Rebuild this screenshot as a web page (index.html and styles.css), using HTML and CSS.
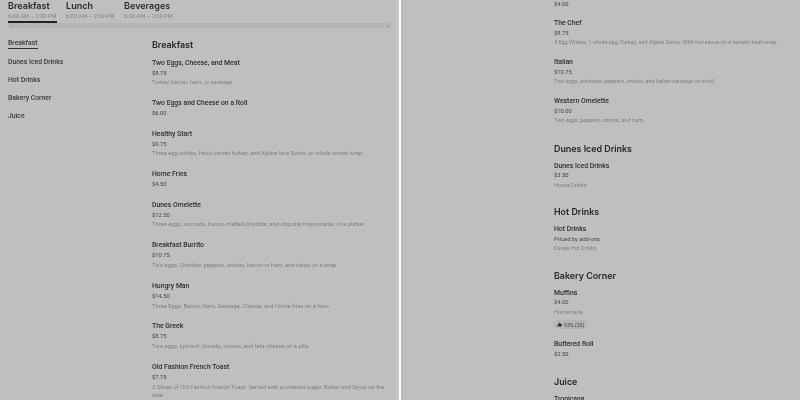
FILE: index.html
```html
<!DOCTYPE html>
<html lang="en">
<head>
<meta charset="utf-8">
<title>Menu</title>
<link rel="stylesheet" href="styles.css">
</head>
<body>
<main class="split">
  <section class="panel panel-left">
    <nav class="tabs">
      <div class="tab tab-active"><div class="tab-name">Breakfast</div><div class="tab-time">6:00 AM – 2:00 PM</div></div>
      <div class="tab"><div class="tab-name">Lunch</div><div class="tab-time">6:00 AM – 2:00 PM</div></div>
      <div class="tab"><div class="tab-name">Beverages</div><div class="tab-time">6:00 AM – 2:00 PM</div></div>
    </nav>
    <div class="hscroll"><span class="arrow">‹</span><span class="arrow">›</span></div>
    <div class="columns">
      <aside class="side">
        <a class="side-link side-active">Breakfast</a>
        <a class="side-link">Dunes Iced Drinks</a>
        <a class="side-link">Hot Drinks</a>
        <a class="side-link">Bakery Corner</a>
        <a class="side-link">Juice</a>
      </aside>
      <div class="menu">
        <h2 class="cat">Breakfast</h2>
        <div class="item"><h3>Two Eggs, Cheese, and Meat</h3><p class="price">$8.75</p><p class="desc">Turkey, bacon, ham, or sausage</p></div>
        <div class="item"><h3>Two Eggs and Cheese on a Roll</h3><p class="price">$6.00</p></div>
        <div class="item"><h3>Healthy Start</h3><p class="price">$9.75</p><p class="desc">Three egg whites, fresh carved turkey, and Alpine lace Swiss on whole wheat wrap.</p></div>
        <div class="item"><h3>Home Fries</h3><p class="price">$4.50</p></div>
        <div class="item"><h3>Dunes Omelette</h3><p class="price">$12.50</p><p class="desc">Three eggs, avocado, bacon, melted Cheddar, and chipotle mayonnaise. In a platter.</p></div>
        <div class="item"><h3>Breakfast Burrito</h3><p class="price">$10.75</p><p class="desc">Two eggs, Cheddar, peppers, onions, bacon or ham, and salsa on a wrap.</p></div>
        <div class="item"><h3>Hungry Man</h3><p class="price">$14.50</p><p class="desc">Three Eggs, Bacon, Ham, Sausage, Cheese, and Home fries on a hero.</p></div>
        <div class="item"><h3>The Greek</h3><p class="price">$8.75</p><p class="desc">Two eggs, spinach, tomato, onions, and feta cheese on a pita.</p></div>
        <div class="item"><h3>Old Fashion French Toast</h3><p class="price">$7.75</p><p class="desc">3 Slices of Old Fashion French Toast. Served with powdered sugar. Butter and Syrup on the side.</p></div>
      </div>
    </div>
  </section>
  <section class="panel panel-right">
    <div class="menu">
      <p class="price price-cut">$4.00</p>
      <div class="item"><h3>The Chef</h3><p class="price">$8.75</p><p class="desc">4 Egg Whites, 1 whole egg, Turkey, and Alpine Swiss. With hot sauce on a tomato basil wrap.</p></div>
      <div class="item"><h3>Italian</h3><p class="price">$10.75</p><p class="desc">Two eggs, potatoes, peppers, onions, and Italian sausage on a roll.</p></div>
      <div class="item"><h3>Western Omelette</h3><p class="price">$10.00</p><p class="desc">Two eggs, peppers, onions, and ham.</p></div>
      <section class="group group-lead">
        <h2 class="cat">Dunes Iced Drinks</h2>
        <div class="item"><h3>Dunes Iced Drinks</h3><p class="price">$3.50</p><p class="desc">House Drinks</p></div>
      </section>
      <section class="group">
        <h2 class="cat">Hot Drinks</h2>
        <div class="item"><h3>Hot Drinks</h3><p class="price">Priced by add-ons</p><p class="desc">Dunes Hot Drinks</p></div>
      </section>
      <section class="group">
        <h2 class="cat">Bakery Corner</h2>
        <div class="item"><h3>Muffins</h3><p class="price">$4.00</p><p class="desc">Homemade</p>
          <span class="pill"><svg class="thumb" viewBox="0 0 12 12" aria-hidden="true"><path d="M1 5.5h2.2V11H1zM4 5.2 6.2 1c.9 0 1.5.7 1.3 1.6L7.2 4.4h2.9c.8 0 1.3.7 1.1 1.4l-1 4.2c-.2.6-.6 1-1.2 1H4z"/></svg>93% (33)</span>
        </div>
        <div class="item"><h3>Buttered Roll</h3><p class="price">$2.50</p></div>
      </section>
      <section class="group">
        <h2 class="cat">Juice</h2>
        <div class="item"><h3>Tropicana</h3></div>
      </section>
    </div>
  </section>
</main>
</body>
</html>
```
FILE: styles.css
```css
* { box-sizing: border-box; }
html, body { margin: 0; height: 100%; overflow: hidden; background: #fff; }
body { font-family: Roboto, "Liberation Sans", sans-serif; color: #333; }
h2, h3, p { margin: 0; font-weight: 500; }
.split { display: flex; gap: 2px; height: 400px; filter: grayscale(1) blur(.3px); }
.panel { flex: 0 0 399px; min-width: 0; height: 400px; overflow: hidden; background: #bfbfbf; }
.panel-left { border-right: 3px solid #c4c4c4; }
.panel-right { border-left: 2px solid #b9b9b9; padding-left: 151px; }
.tabs { display: flex; gap: 9.5px; padding-left: 8px; }
.tab { height: 23px; white-space: nowrap; }
.tab-active { border-bottom: 2px solid #222; }
.tab-name { font-family: Inter, sans-serif; font-weight: 600; font-size: 9px; line-height: 12px; color: #2a2a2a; }
.tab-time { font-size: 5.7px; line-height: 9px; color: #858585; }
.hscroll { display: flex; justify-content: space-between; align-items: center; height: 5px; margin: 0 5px 0 8px; padding: 0 2px; background: #b5b5b5; font-size: 6px; line-height: 5px; color: #777; }
.columns { display: flex; padding-left: 8px; }
.side { width: 144px; flex: none; display: flex; flex-direction: column; align-items: flex-start; padding-top: 9.5px; gap: 8px; }
.side-link { font-size: 6.85px; line-height: 10px; color: #3a3a3a; font-weight: 500; }
.side-active { border-bottom: 1px solid #333; margin-bottom: .5px; }
.menu { flex: 1; min-width: 0; padding-right: 4px; }
.columns .menu { padding-top: 10px; }
.cat { font-family: Inter, sans-serif; font-size: 8.9px; line-height: 13px; font-weight: 600; color: #262626; margin-bottom: 7.5px; }
.item { padding-bottom: 11.25px; }
.item h3 { font-size: 6.85px; line-height: 9px; color: #2e2e2e; }
.price { font-size: 5.8px; line-height: 10.3px; color: #444; font-weight: 400; }
.desc { font-size: 5.8px; line-height: 8.5px; margin: .5px 0 1px; color: #808080; font-weight: 400; }
.price-cut { line-height: 7px; margin-bottom: 9.5px; }
.panel-right .item { padding-bottom: 11px; }
.panel-right .item h3, .panel-right .price { line-height: 9.5px; }
.panel-right .desc { font-size: 5.5px; line-height: 9px; margin: 0; }
.group { padding-top: 4.5px; }
.group-lead { padding-top: 5.5px; }
.group .cat { margin-bottom: 7px; }
.pill { display: flex; width: fit-content; align-items: center; gap: 2px; height: 9px; margin-top: 3.5px; padding: 0 3px; border-radius: 5px; background: #b5b5b5; font-size: 5.2px; color: #444; }
.thumb { width: 5px; height: 5px; fill: #222; }
```
